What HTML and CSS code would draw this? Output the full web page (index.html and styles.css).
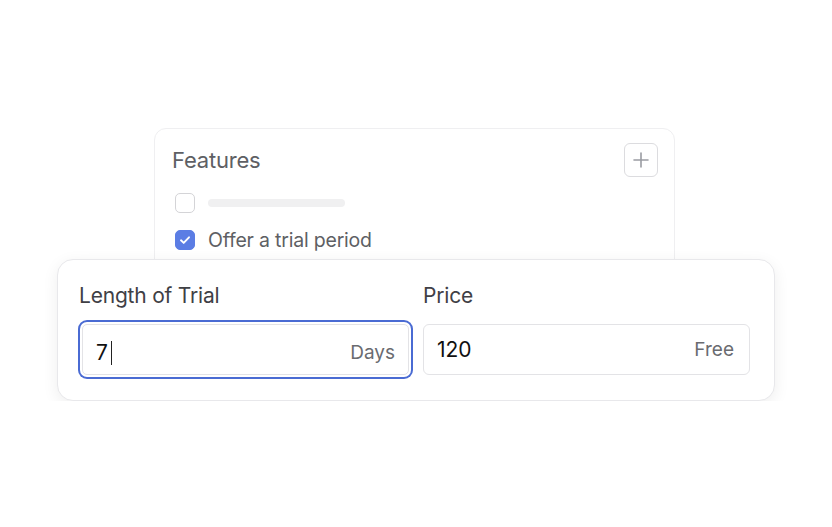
FILE: index.html
```html
<!DOCTYPE html>
<html lang="en">
<head>
    <meta charset="UTF-8">
    <meta name="viewport" content="width=device-width, initial-scale=1.0">
    <title>Trial settings</title>
    <link rel="stylesheet" href="styles.css">
</head>
<body>
    <div class="stage">
        <div class="features">
            <div class="features-head">
                <h2>Features</h2>
                <button class="add-btn" aria-label="Add feature">
                    <svg width="18" height="18" viewBox="0 0 18 18"><path d="M9 2v14M2 9h14" stroke="#9a9ca2" stroke-width="1.6" stroke-linecap="round"/></svg>
                </button>
            </div>
            <div class="feature-row">
                <span class="check"></span>
                <span class="placeholder-bar"></span>
            </div>
            <div class="feature-row">
                <span class="check checked">
                    <svg width="14" height="14" viewBox="0 0 14 14"><path d="M3 7.3l2.7 2.6 5.3-5.6" fill="none" stroke="#fff" stroke-width="1.9" stroke-linecap="round" stroke-linejoin="round"/></svg>
                </span>
                <span class="feature-label">Offer a trial period</span>
            </div>
        </div>

        <div class="trial-card">
            <div class="field">
                <label>Length of Trial</label>
                <div class="input focused">
                    <span class="value">7<span class="caret"></span></span>
                    <span class="suffix">Days</span>
                </div>
            </div>
            <div class="field">
                <label>Price</label>
                <div class="input">
                    <span class="value">120</span>
                    <span class="suffix">Free</span>
                </div>
            </div>
        </div>
    </div>
</body>
</html>
```

FILE: styles.css
```css
:root {
    --accent: #4a6bd3;
    --check-color: #5b7de4;
    --muted-text: #5e5f64;
    --label-text: #3f4045;
    --border: #e3e3e6;
}
* {
    box-sizing: border-box;
}
body {
    margin: 0;
    background: #ffffff;
    font-family: 'Inter', 'Liberation Sans', Arial, sans-serif;
    color: var(--label-text);
}
.stage {
    padding-top: 128px;
    display: flex;
    flex-direction: column;
    align-items: center;
}

/* back card */
.features {
    width: 521px;
    margin-left: -3px;
    padding: 14px 17px 24px;
    border: 1px solid #efeff1;
    border-radius: 12px;
    background: #fff;
}
.features-head {
    display: flex;
    align-items: center;
    justify-content: space-between;
    height: 33px;
}
.features-head h2 {
    margin: 0;
    font-size: 22px;
    font-weight: 400;
    color: var(--muted-text);
    letter-spacing: -0.2px;
}
.add-btn {
    width: 34px;
    height: 34px;
    margin-right: -1px;
    padding: 0;
    display: flex;
    align-items: center;
    justify-content: center;
    border: 1px solid #dcdcdf;
    border-radius: 6px;
    background: #fff;
}
.feature-row {
    display: flex;
    align-items: center;
    gap: 13px;
    height: 20px;
    margin-top: 17px;
    padding-left: 3px;
}
.check {
    width: 20px;
    height: 20px;
    border: 1.5px solid #d4d4d7;
    border-radius: 5px;
    display: flex;
    align-items: center;
    justify-content: center;
}
.check.checked {
    background: var(--check-color);
    border-color: var(--check-color);
}
.placeholder-bar {
    width: 137px;
    height: 8px;
    border-radius: 4px;
    background: #f0f0f1;
}
.feature-label {
    font-size: 19.5px;
    color: var(--muted-text);
    letter-spacing: -0.2px;
}

/* front card */
.trial-card {
    position: relative;
    width: 718px;
    margin-top: -16px;
    padding: 24px 24px 25px;
    display: grid;
    grid-template-columns: 1fr 1fr;
    gap: 14px;
    background: #fff;
    border: 1px solid #e8e8eb;
    border-radius: 16px;
    box-shadow: 0 4px 16px rgba(0, 0, 0, 0.07);
}
.field label {
    display: block;
    height: 24px;
    line-height: 24px;
    margin-bottom: 16px;
    font-size: 21px;
    color: var(--label-text);
    letter-spacing: -0.2px;
}
.field:first-child label {
    margin-left: -3px;
}
.input {
    height: 51px;
    display: flex;
    align-items: center;
    justify-content: space-between;
    padding: 0 15px 0 13px;
    border: 1px solid var(--border);
    border-radius: 6px;
    background: #fff;
}
.input.focused {
    padding-right: 13px;
    box-shadow: 0 0 0 2px #fff, 0 0 0 4px var(--accent);
    border-radius: 5px;
}
.value {
    display: flex;
    align-items: center;
    font-size: 21px;
    color: #111;
}
.caret {
    display: inline-block;
    width: 1.5px;
    height: 24px;
    margin-left: 3px;
    background: #222;
}
.suffix {
    font-size: 19px;
    color: #6a6b70;
}
.field:first-child .suffix {
    margin-top: 6px;
}
.field:first-child .value {
    margin-top: 6px;
}
```
